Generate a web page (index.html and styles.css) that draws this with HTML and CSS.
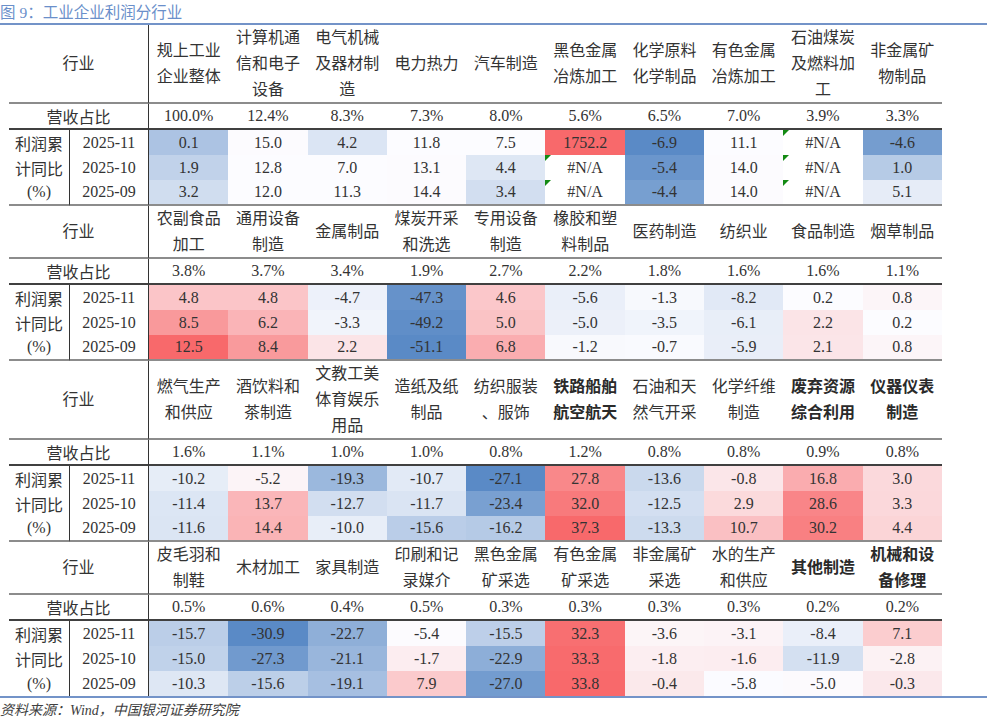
FILE: index.html
```html
<!DOCTYPE html>
<html lang="zh-CN">
<head>
<meta charset="utf-8">
<title>工业企业利润分行业</title>
<link rel="stylesheet" href="styles.css">
</head>
<body>
<div class="title">图 9：工业企业利润分行业</div>
<div class="tbl">
  <div class="sec tall">
    <div class="hd lbl">行业</div>
    <div class="hd">规上工业<br>企业整体</div>
    <div class="hd">计算机通<br>信和电子<br>设备</div>
    <div class="hd">电气机械<br>及器材制<br>造</div>
    <div class="hd">电力热力</div>
    <div class="hd">汽车制造</div>
    <div class="hd">黑色金属<br>冶炼加工</div>
    <div class="hd">化学原料<br>化学制品</div>
    <div class="hd">有色金属<br>冶炼加工</div>
    <div class="hd">石油煤炭<br>及燃料加<br>工</div>
    <div class="hd">非金属矿<br>物制品</div>

    <div class="rv lbl">营收占比</div>
    <div class="rv">100.0%</div><div class="rv">12.4%</div><div class="rv">8.3%</div><div class="rv">7.3%</div><div class="rv">8.0%</div><div class="rv">5.6%</div><div class="rv">6.5%</div><div class="rv">7.0%</div><div class="rv">3.9%</div><div class="rv">3.3%</div>

    <div class="c1">利润累</div><div class="c2">2025-11</div>
    <div class="v">0.1</div><div class="v">15.0</div><div class="v">4.2</div><div class="v">11.8</div><div class="v">7.5</div><div class="v">1752.2</div><div class="v">-6.9</div><div class="v">11.1</div><div class="v na">#N/A</div><div class="v">-4.6</div>

    <div class="c1">计同比</div><div class="c2">2025-10</div>
    <div class="v">1.9</div><div class="v">12.8</div><div class="v">7.0</div><div class="v">13.1</div><div class="v">4.4</div><div class="v na">#N/A</div><div class="v">-5.4</div><div class="v">14.0</div><div class="v na">#N/A</div><div class="v">1.0</div>

    <div class="c1 end">(%)</div><div class="c2 end">2025-09</div>
    <div class="v end">3.2</div><div class="v end">12.0</div><div class="v end">11.3</div><div class="v end">14.4</div><div class="v end">3.4</div><div class="v na end">#N/A</div><div class="v end">-4.4</div><div class="v end">14.0</div><div class="v na end">#N/A</div><div class="v end">5.1</div>
  </div>

  <div class="sec short">
    <div class="hd lbl">行业</div>
    <div class="hd">农副食品<br>加工</div>
    <div class="hd">通用设备<br>制造</div>
    <div class="hd">金属制品</div>
    <div class="hd">煤炭开采<br>和洗选</div>
    <div class="hd">专用设备<br>制造</div>
    <div class="hd">橡胶和塑<br>料制品</div>
    <div class="hd">医药制造</div>
    <div class="hd">纺织业</div>
    <div class="hd">食品制造</div>
    <div class="hd">烟草制品</div>

    <div class="rv lbl">营收占比</div>
    <div class="rv">3.8%</div><div class="rv">3.7%</div><div class="rv">3.4%</div><div class="rv">1.9%</div><div class="rv">2.7%</div><div class="rv">2.2%</div><div class="rv">1.8%</div><div class="rv">1.6%</div><div class="rv">1.6%</div><div class="rv">1.1%</div>

    <div class="c1">利润累</div><div class="c2">2025-11</div>
    <div class="v">4.8</div><div class="v">4.8</div><div class="v">-4.7</div><div class="v">-47.3</div><div class="v">4.6</div><div class="v">-5.6</div><div class="v">-1.3</div><div class="v">-8.2</div><div class="v">0.2</div><div class="v">0.8</div>

    <div class="c1">计同比</div><div class="c2">2025-10</div>
    <div class="v">8.5</div><div class="v">6.2</div><div class="v">-3.3</div><div class="v">-49.2</div><div class="v">5.0</div><div class="v">-5.0</div><div class="v">-3.5</div><div class="v">-6.1</div><div class="v">2.2</div><div class="v">0.2</div>

    <div class="c1 end">(%)</div><div class="c2 end">2025-09</div>
    <div class="v end">12.5</div><div class="v end">8.4</div><div class="v end">2.2</div><div class="v end">-51.1</div><div class="v end">6.8</div><div class="v end">-1.2</div><div class="v end">-0.7</div><div class="v end">-5.9</div><div class="v end">2.1</div><div class="v end">0.8</div>
  </div>

  <div class="sec tall">
    <div class="hd lbl">行业</div>
    <div class="hd">燃气生产<br>和供应</div>
    <div class="hd">酒饮料和<br>茶制造</div>
    <div class="hd">文教工美<br>体育娱乐<br>用品</div>
    <div class="hd">造纸及纸<br>制品</div>
    <div class="hd">纺织服装<br>、服饰</div>
    <div class="hd b">铁路船舶<br>航空航天</div>
    <div class="hd">石油和天<br>然气开采</div>
    <div class="hd">化学纤维<br>制造</div>
    <div class="hd b">废弃资源<br>综合利用</div>
    <div class="hd b">仪器仪表<br>制造</div>

    <div class="rv lbl">营收占比</div>
    <div class="rv">1.6%</div><div class="rv">1.1%</div><div class="rv">1.0%</div><div class="rv">1.0%</div><div class="rv">0.8%</div><div class="rv">1.2%</div><div class="rv">0.8%</div><div class="rv">0.8%</div><div class="rv">0.9%</div><div class="rv">0.8%</div>

    <div class="c1">利润累</div><div class="c2">2025-11</div>
    <div class="v">-10.2</div><div class="v">-5.2</div><div class="v">-19.3</div><div class="v">-10.7</div><div class="v">-27.1</div><div class="v">27.8</div><div class="v">-13.6</div><div class="v">-0.8</div><div class="v">16.8</div><div class="v">3.0</div>

    <div class="c1">计同比</div><div class="c2">2025-10</div>
    <div class="v">-11.4</div><div class="v">13.7</div><div class="v">-12.7</div><div class="v">-11.7</div><div class="v">-23.4</div><div class="v">32.0</div><div class="v">-12.5</div><div class="v">2.9</div><div class="v">28.6</div><div class="v">3.3</div>

    <div class="c1 end">(%)</div><div class="c2 end">2025-09</div>
    <div class="v end">-11.6</div><div class="v end">14.4</div><div class="v end">-10.0</div><div class="v end">-15.6</div><div class="v end">-16.2</div><div class="v end">37.3</div><div class="v end">-13.3</div><div class="v end">10.7</div><div class="v end">30.2</div><div class="v end">4.4</div>
  </div>

  <div class="sec short final">
    <div class="hd lbl">行业</div>
    <div class="hd">皮毛羽和<br>制鞋</div>
    <div class="hd">木材加工</div>
    <div class="hd">家具制造</div>
    <div class="hd">印刷和记<br>录媒介</div>
    <div class="hd">黑色金属<br>矿采选</div>
    <div class="hd">有色金属<br>矿采选</div>
    <div class="hd">非金属矿<br>采选</div>
    <div class="hd">水的生产<br>和供应</div>
    <div class="hd b">其他制造</div>
    <div class="hd b">机械和设<br>备修理</div>

    <div class="rv lbl">营收占比</div>
    <div class="rv">0.5%</div><div class="rv">0.6%</div><div class="rv">0.4%</div><div class="rv">0.5%</div><div class="rv">0.3%</div><div class="rv">0.3%</div><div class="rv">0.3%</div><div class="rv">0.3%</div><div class="rv">0.2%</div><div class="rv">0.2%</div>

    <div class="c1">利润累</div><div class="c2">2025-11</div>
    <div class="v">-15.7</div><div class="v">-30.9</div><div class="v">-22.7</div><div class="v">-5.4</div><div class="v">-15.5</div><div class="v">32.3</div><div class="v">-3.6</div><div class="v">-3.1</div><div class="v">-8.4</div><div class="v">7.1</div>

    <div class="c1">计同比</div><div class="c2">2025-10</div>
    <div class="v">-15.0</div><div class="v">-27.3</div><div class="v">-21.1</div><div class="v">-1.7</div><div class="v">-22.9</div><div class="v">33.3</div><div class="v">-1.8</div><div class="v">-1.6</div><div class="v">-11.9</div><div class="v">-2.8</div>

    <div class="c1">(%)</div><div class="c2">2025-09</div>
    <div class="v">-10.3</div><div class="v">-15.6</div><div class="v">-19.1</div><div class="v">7.9</div><div class="v">-27.0</div><div class="v">33.8</div><div class="v">-0.4</div><div class="v">-5.8</div><div class="v">-5.0</div><div class="v">-0.3</div>
  </div>
</div>
<div class="foot">资料来源：Wind，中国银河证券研究院</div>
<script src="script.js"></script>
</body>
</html>
```

FILE: styles.css
```css
* { box-sizing: border-box; }
html, body { margin: 0; padding: 0; background: #fff; }
body {
  width: 987px;
  font-family: "Liberation Serif", "Noto Sans CJK SC", serif;
  color: #333;
}
.title {
  height: 25px;
  line-height: 25px;
  font-size: 15.5px;
  color: #6a8fca;
  border-bottom: 2px solid #7393c8;
  white-space: nowrap;
}
.tbl {
  padding-left: 9px;
  border-bottom: 2px solid #7393c8;
}
.sec {
  display: grid;
  width: 933px;
  grid-template-columns: 61px 79px repeat(10, 79.3px);
  font-size: 16px;
}
.sec.tall { grid-template-rows: 79px 26px 25px 25px 26px; }
.sec.short { grid-template-rows: 53px 26px 25px 25px 26px; }
.sec.short.final { grid-template-rows: 53px 26px 25px 25px 25px; }
.sec > div {
  display: flex;
  align-items: center;
  justify-content: center;
  text-align: center;
  white-space: nowrap;
}
.hd {
  line-height: 26px;
  border-bottom: 2px solid #8c8c8c;
}
.hd.b { font-weight: 700; color: #2a2a2a; }
.lbl {
  grid-column: span 2;
  border-right: 1px solid #333;
}
.rv { border-bottom: 2px solid #404040; }
.c1, .c2 { border-right: 1px solid #333; }
.end { border-bottom: 2px solid #8c8c8c; }
.v { position: relative; }
.na::before {
  content: "";
  position: absolute;
  top: 0;
  left: 0;
  border-top: 6px solid #138a13;
  border-right: 6px solid transparent;
}
.foot {
  font-style: italic;
  font-size: 14px;
  line-height: 22px;
  padding-top: 2px;
  color: #404040;
  white-space: nowrap;
}
```

FILE: script.js
```js
(function () {
  var W = [252, 252, 255], B = [90, 138, 198], R = [248, 105, 107];
  document.querySelectorAll('.sec').forEach(function (sec) {
    var cells = Array.prototype.slice.call(sec.querySelectorAll('.v'));
    var vals = cells.map(function (c) { return parseFloat(c.textContent); })
      .filter(function (v) { return !isNaN(v); })
      .sort(function (a, b) { return a - b; });
    var n = vals.length;
    var p = (n - 1) * 0.5, lo = Math.floor(p), hi = Math.ceil(p);
    var mid = vals[lo] + (vals[hi] - vals[lo]) * (p - lo);
    var min = vals[0], max = vals[n - 1];
    cells.forEach(function (c) {
      var v = parseFloat(c.textContent);
      if (isNaN(v)) return;
      var t, C;
      if (v >= mid) { t = max === mid ? 0 : (v - mid) / (max - mid); C = R; }
      else { t = (mid - v) / (mid - min); C = B; }
      var rgb = W.map(function (w, i) { return Math.round(w + (C[i] - w) * t); });
      c.style.background = 'rgb(' + rgb.join(',') + ')';
    });
  });
})();
```
